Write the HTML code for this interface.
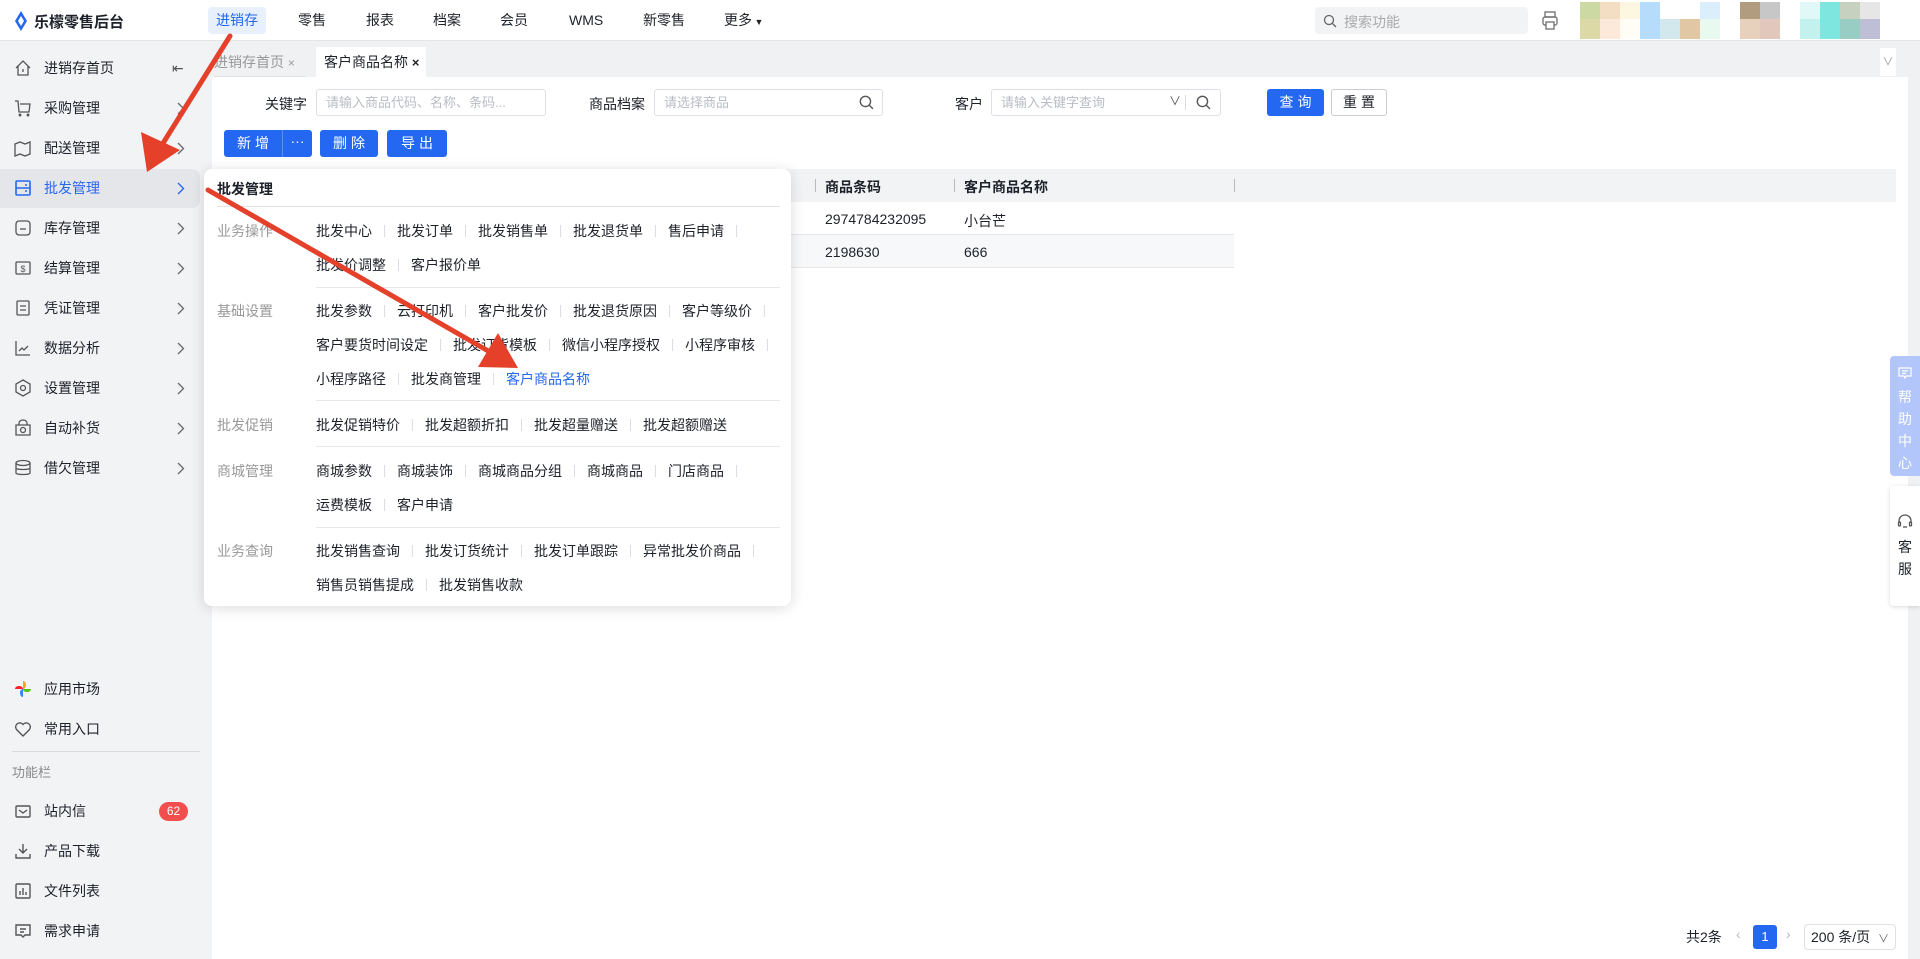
<!DOCTYPE html>
<html><head><meta charset="utf-8"><style>
*{margin:0;padding:0;box-sizing:border-box}
body{width:1920px;height:959px;position:relative;overflow:hidden;background:#fff;font-family:"Liberation Sans","Noto Sans CJK SC",sans-serif;font-size:14px;color:#1d2129}
.abs{position:absolute}
.top{left:0;top:0;width:1920px;height:41px;background:#fff;border-bottom:1px solid #e3e5e8}
.nav{top:0;height:41px;line-height:41px;font-size:14px;color:#1d2129}
.side{left:0;top:41px;width:212px;height:918px;background:#f2f3f5}
.si{position:absolute;left:0;width:200px;height:39px;line-height:39px;padding-left:44px;font-size:14px;color:#1d2129}
.si svg{position:absolute;left:14px;top:10px}
.si .chev{position:absolute;left:177px;top:13px}
.act{background:#e5e6ea;border-radius:0 8px 8px 0;color:#2468f2}
.inp{height:27px;border:1px solid #dcdfe6;border-radius:3px;background:#fff;color:#b8bcc4;font-size:13px;line-height:25px;padding-left:9px}
.btn{height:27px;line-height:27px;background:#2468f2;color:#fff;text-align:center;border-radius:3px;font-size:14px;letter-spacing:4px}
.pop{left:204px;top:169px;width:587px;height:437px;background:#fff;border-radius:8px;box-shadow:0 2px 14px rgba(0,0,0,.14)}
.row{position:absolute;left:112px;font-size:14px;color:#1d2129;white-space:nowrap}
.row span{display:inline-block}
.row i{display:inline-block;width:1px;height:12px;background:#dcdfe6;margin:0 12px;vertical-align:-1px}
.gl{position:absolute;left:13px;color:#999;font-size:14px}
.hl{position:absolute;left:112px;width:464px;height:1px;background:#e8e8e8}
.av{position:absolute;width:20px}
</style></head><body>
<div class="abs top"></div>
<svg class="abs" style="left:14px;top:11px" width="14" height="20" viewBox="0 0 14 20"><path d="M7 0 L13 10 L7 20 L1 10Z" fill="#2468f2"/><path d="M7 5 L10 10 L7 15 L4 10Z" fill="#fff"/></svg>
<div class="abs" style="left:34px;top:11px;font-size:15px;font-weight:bold;color:#1d2129">乐檬零售后台</div>
<div class="abs" style="left:208px;top:7px;width:58px;height:27px;background:#e8effd;border-radius:4px"></div>
<div class="abs nav" style="left:216px;color:#2468f2">进销存</div>
<div class="abs nav" style="left:298px">零售</div>
<div class="abs nav" style="left:366px">报表</div>
<div class="abs nav" style="left:433px">档案</div>
<div class="abs nav" style="left:500px">会员</div>
<div class="abs nav" style="left:569px">WMS</div>
<div class="abs nav" style="left:643px">新零售</div>
<div class="abs nav" style="left:724px">更多<span style="font-size:9px"> ▼</span></div>
<div class="abs" style="left:1315px;top:7px;width:213px;height:27px;background:#f2f3f5;border-radius:4px"></div>
<svg class="abs" style="left:1323px;top:14px" width="14" height="14" viewBox="0 0 14 14"><circle cx="6" cy="6" r="4.5" fill="none" stroke="#666" stroke-width="1.3"/><path d="M9.5 9.5L13 13" stroke="#666" stroke-width="1.3"/></svg>
<div class="abs" style="left:1344px;top:12px;color:#aaa;font-size:14px">搜索功能</div>
<svg class="abs" style="left:1542px;top:11px" width="16" height="20" viewBox="0 0 16 20"><rect x="3" y="1" width="10" height="5" fill="none" stroke="#777" stroke-width="1.4"/><rect x="1" y="6" width="14" height="8" rx="2" fill="none" stroke="#777" stroke-width="1.4"/><rect x="4" y="11" width="8" height="7" fill="#fff" stroke="#777" stroke-width="1.4"/></svg>
<!-- blurred avatars -->
<div class="av" style="left:1580px;top:2px;height:17px;background:#cdd9a3"></div><div class="av" style="left:1580px;top:19px;height:20px;background:#dcd9a6"></div>
<div class="av" style="left:1600px;top:2px;height:17px;background:#f3dec4"></div><div class="av" style="left:1600px;top:19px;height:20px;background:#fde9d9"></div>
<div class="av" style="left:1620px;top:2px;height:17px;background:#fdf6e1"></div><div class="av" style="left:1620px;top:19px;height:20px;background:#fffdf5"></div>
<div class="av" style="left:1640px;top:2px;height:37px;background:#b5dcfa"></div>
<div class="av" style="left:1660px;top:19px;height:20px;background:#d3e8ec"></div>
<div class="av" style="left:1680px;top:19px;height:20px;background:#e2c7a4"></div>
<div class="av" style="left:1700px;top:2px;height:17px;background:#dbeefc"></div><div class="av" style="left:1700px;top:19px;height:20px;background:#e8f9ef"></div>
<div class="av" style="left:1740px;top:2px;height:17px;background:#b19c80"></div><div class="av" style="left:1740px;top:19px;height:20px;background:#e7d1bd"></div>
<div class="av" style="left:1760px;top:2px;height:17px;background:#c7c7c7"></div><div class="av" style="left:1760px;top:19px;height:20px;background:#e2c8bc"></div>
<div class="av" style="left:1800px;top:2px;height:17px;background:#e0f8f6"></div><div class="av" style="left:1800px;top:19px;height:20px;background:#c2f1ee"></div>
<div class="av" style="left:1820px;top:2px;height:37px;background:#7ee6df"></div>
<div class="av" style="left:1840px;top:2px;height:17px;background:#c6d1c0"></div><div class="av" style="left:1840px;top:19px;height:20px;background:#98cdc4"></div>
<div class="av" style="left:1860px;top:2px;height:17px;background:#e6e6e6"></div><div class="av" style="left:1860px;top:19px;height:20px;background:#bebfd6"></div>

<!-- sidebar -->
<div class="abs side"></div>
<div class="si" style="top:49px">
<svg width="18" height="18" viewBox="0 0 18 18" fill="none" stroke="#555" stroke-width="1.3"><path d="M2 9L9 2L16 9M4 7V16H14V7M9 10V13"/></svg>进销存首页<span class="chev" style="left:172px;top:0;color:#555">⇤</span></div>
<div class="si" style="top:89px"><svg width="18" height="18" viewBox="0 0 18 18" fill="none" stroke="#555" stroke-width="1.3"><path d="M1 2H4L5 13H15L16 5H6"/><circle cx="6" cy="16" r=".8"/><circle cx="14" cy="16" r=".8"/></svg>采购管理<svg class="chev" style="left:177px;top:13px" width="8" height="13" viewBox="0 0 8 13" fill="none" stroke="#666" stroke-width="1.3"><path d="M1 1L6.5 6.5L1 12"/></svg></div>
<div class="si" style="top:129px"><svg width="18" height="18" viewBox="0 0 18 18" fill="none" stroke="#555" stroke-width="1.3"><path d="M1 5L6 3L11 5L16 3V15L11 17L6 15L1 17Z"/></svg>配送管理<svg class="chev" style="left:177px;top:13px" width="8" height="13" viewBox="0 0 8 13" fill="none" stroke="#666" stroke-width="1.3"><path d="M1 1L6.5 6.5L1 12"/></svg></div>
<div class="si act" style="top:169px"><svg width="18" height="18" viewBox="0 0 18 18" fill="none" stroke="#2468f2" stroke-width="1.6"><rect x="2" y="2" width="14" height="14" rx="1"/><path d="M2 9H16M11 6H13M11 12H13"/></svg>批发管理<svg class="chev" style="left:177px;top:13px" width="8" height="13" viewBox="0 0 8 13" fill="none" stroke="#2468f2" stroke-width="1.4"><path d="M1 1L6.5 6.5L1 12"/></svg></div>
<div class="si" style="top:209px"><svg width="18" height="18" viewBox="0 0 18 18" fill="none" stroke="#555" stroke-width="1.3"><rect x="2" y="2" width="14" height="14" rx="3"/><path d="M6 10H12"/></svg>库存管理<svg class="chev" style="left:177px;top:13px" width="8" height="13" viewBox="0 0 8 13" fill="none" stroke="#666" stroke-width="1.3"><path d="M1 1L6.5 6.5L1 12"/></svg></div>
<div class="si" style="top:249px"><svg width="18" height="18" viewBox="0 0 18 18" fill="none" stroke="#555" stroke-width="1.3"><rect x="2" y="3" width="14" height="12" rx="1"/><text x="9" y="13" font-size="9" text-anchor="middle" fill="#555" stroke="none">$</text></svg>结算管理<svg class="chev" style="left:177px;top:13px" width="8" height="13" viewBox="0 0 8 13" fill="none" stroke="#666" stroke-width="1.3"><path d="M1 1L6.5 6.5L1 12"/></svg></div>
<div class="si" style="top:289px"><svg width="18" height="18" viewBox="0 0 18 18" fill="none" stroke="#555" stroke-width="1.3"><rect x="3" y="2" width="12" height="14" rx="1"/><path d="M6 7H12M6 11H12"/></svg>凭证管理<svg class="chev" style="left:177px;top:13px" width="8" height="13" viewBox="0 0 8 13" fill="none" stroke="#666" stroke-width="1.3"><path d="M1 1L6.5 6.5L1 12"/></svg></div>
<div class="si" style="top:329px"><svg width="18" height="18" viewBox="0 0 18 18" fill="none" stroke="#555" stroke-width="1.3"><path d="M2 2V16H16M5 12L8 9L10 11L14 7"/></svg>数据分析<svg class="chev" style="left:177px;top:13px" width="8" height="13" viewBox="0 0 8 13" fill="none" stroke="#666" stroke-width="1.3"><path d="M1 1L6.5 6.5L1 12"/></svg></div>
<div class="si" style="top:369px"><svg width="18" height="18" viewBox="0 0 18 18" fill="none" stroke="#555" stroke-width="1.3"><path d="M9 1L16 5V13L9 17L2 13V5Z"/><circle cx="9" cy="9" r="2.5"/></svg>设置管理<svg class="chev" style="left:177px;top:13px" width="8" height="13" viewBox="0 0 8 13" fill="none" stroke="#666" stroke-width="1.3"><path d="M1 1L6.5 6.5L1 12"/></svg></div>
<div class="si" style="top:409px"><svg width="18" height="18" viewBox="0 0 18 18" fill="none" stroke="#555" stroke-width="1.3"><path d="M5 6V4A4 3 0 0 1 13 4V6M2 6H16V16H2Z"/><circle cx="9" cy="11" r="2.5"/></svg>自动补货<svg class="chev" style="left:177px;top:13px" width="8" height="13" viewBox="0 0 8 13" fill="none" stroke="#666" stroke-width="1.3"><path d="M1 1L6.5 6.5L1 12"/></svg></div>
<div class="si" style="top:449px"><svg width="18" height="18" viewBox="0 0 18 18" fill="none" stroke="#555" stroke-width="1.3"><ellipse cx="9" cy="4" rx="7" ry="2.5"/><path d="M2 4V14C2 16 16 16 16 14V4M2 9C2 11 16 11 16 9"/></svg>借欠管理<svg class="chev" style="left:177px;top:13px" width="8" height="13" viewBox="0 0 8 13" fill="none" stroke="#666" stroke-width="1.3"><path d="M1 1L6.5 6.5L1 12"/></svg></div>

<div class="si" style="top:670px"><svg width="18" height="18" viewBox="0 0 18 18"><path d="M9 1C13 1 13 9 9 9Z" fill="#f5a623"/><path d="M17 9C17 13 9 13 9 9Z" fill="#52c41a"/><path d="M9 17C5 17 5 9 9 9Z" fill="#2f8cf5"/><path d="M1 9C1 5 9 5 9 9Z" fill="#f5222d"/></svg>应用市场</div>
<div class="si" style="top:710px"><svg width="18" height="18" viewBox="0 0 18 18" fill="none" stroke="#555" stroke-width="1.4"><path d="M9 16L2.5 9.5A3.7 3.7 0 0 1 9 4.5A3.7 3.7 0 0 1 15.5 9.5Z"/></svg>常用入口</div>
<div class="abs" style="left:12px;top:751px;width:188px;height:1px;background:#d9dbe0"></div>
<div class="abs" style="left:12px;top:762px;color:#888;font-size:13px">功能栏</div>
<div class="si" style="top:792px"><svg width="18" height="18" viewBox="0 0 18 18" fill="none" stroke="#555" stroke-width="1.4"><rect x="2" y="4" width="14" height="11" rx="1"/><path d="M5 8L9 11L13 8"/></svg>站内信</div>
<div class="abs" style="left:159px;top:802px;width:29px;height:19px;border-radius:10px;background:#f24e4e;color:#fff;font-size:12px;text-align:center;line-height:19px">62</div>
<div class="si" style="top:832px"><svg width="18" height="18" viewBox="0 0 18 18" fill="none" stroke="#555" stroke-width="1.4"><path d="M9 2V11M5 7L9 11L13 7M2 12V16H16V12"/></svg>产品下载</div>
<div class="si" style="top:872px"><svg width="18" height="18" viewBox="0 0 18 18" fill="none" stroke="#555" stroke-width="1.4"><rect x="2" y="2" width="14" height="14" rx="1"/><path d="M6 13V9M9 13V6M12 13V10"/></svg>文件列表</div>
<div class="si" style="top:912px"><svg width="18" height="18" viewBox="0 0 18 18" fill="none" stroke="#555" stroke-width="1.4"><path d="M2 3H16V13H11L9 15L7 13H2Z"/><path d="M6 7H12M6 10H10"/></svg>需求申请</div>

<!-- tab row -->
<div class="abs" style="left:212px;top:41px;width:1708px;height:36px;background:#f0f1f3"></div>
<div class="abs" style="left:214px;top:47px;width:92px;height:30px;line-height:30px;color:#999;font-size:14px;border-bottom:1px solid #e0e0e0">进销存首页 <span style="font-size:12px">×</span></div>
<div class="abs" style="left:316px;top:47px;width:110px;height:30px;line-height:30px;background:#fff;padding-left:8px;font-size:14px">客户商品名称 <b style="font-size:13px">×</b></div>
<div class="abs" style="left:1880px;top:48px;width:16px;height:28px;background:#fff;color:#999;text-align:center;line-height:28px;font-size:11px">∨</div>
<div class="abs" style="left:212px;top:77px;width:1696px;height:882px;background:#fff"></div>
<div class="abs" style="left:1908px;top:77px;width:12px;height:882px;background:#f0f1f3"></div>

<!-- filters -->
<div class="abs" style="left:265px;top:94px;font-size:14px">关键字</div>
<div class="abs inp" style="left:316px;top:89px;width:230px">请输入商品代码、名称、条码...</div>
<div class="abs" style="left:589px;top:94px;font-size:14px">商品档案</div>
<div class="abs inp" style="left:654px;top:89px;width:229px">请选择商品</div>
<svg class="abs" style="left:859px;top:95px" width="15" height="15" viewBox="0 0 14 14"><circle cx="6" cy="6" r="4.8" fill="none" stroke="#555" stroke-width="1.3"/><path d="M9.5 9.5L13 13" stroke="#555" stroke-width="1.3"/></svg>
<div class="abs" style="left:955px;top:94px;font-size:14px">客户</div>
<div class="abs inp" style="left:991px;top:89px;width:230px">请输入关键字查询</div>
<div class="abs" style="left:1169px;top:92px;color:#555;font-size:12px">∨</div>
<div class="abs" style="left:1185px;top:95px;width:1px;height:15px;background:#ddd"></div>
<svg class="abs" style="left:1196px;top:95px" width="15" height="15" viewBox="0 0 14 14"><circle cx="6" cy="6" r="4.8" fill="none" stroke="#555" stroke-width="1.3"/><path d="M9.5 9.5L13 13" stroke="#555" stroke-width="1.3"/></svg>
<div class="abs btn" style="left:1267px;top:89px;width:57px;padding-left:4px">查询</div>
<div class="abs btn" style="left:1331px;top:89px;width:56px;background:#fff;color:#1d2129;border:1px solid #c9ccd1;line-height:25px;padding-left:4px">重置</div>

<div class="abs btn" style="left:224px;top:130px;width:88px"></div>
<div class="abs" style="left:224px;top:130px;width:58px;height:27px;line-height:27px;color:#fff;text-align:center;letter-spacing:4px;padding-left:4px">新增</div>
<div class="abs" style="left:282px;top:130px;width:1px;height:27px;background:#5b8ff5"></div>
<div class="abs" style="left:283px;top:128px;width:29px;color:#fff;text-align:center;font-size:14px;line-height:27px">···</div>
<div class="abs btn" style="left:320px;top:130px;width:58px;padding-left:4px">删除</div>
<div class="abs btn" style="left:387px;top:130px;width:60px;padding-left:4px">导出</div>

<!-- table -->
<div class="abs" style="left:224px;top:169px;width:1672px;height:33px;background:#f2f3f5"></div>
<div class="abs" style="left:815px;top:179px;width:1px;height:13px;background:#bbb"></div>
<div class="abs" style="left:825px;top:177px;font-weight:bold">商品条码</div>
<div class="abs" style="left:954px;top:179px;width:1px;height:13px;background:#bbb"></div>
<div class="abs" style="left:964px;top:177px;font-weight:bold">客户商品名称</div>
<div class="abs" style="left:1234px;top:179px;width:1px;height:13px;background:#bbb"></div>
<div class="abs" style="left:224px;top:234px;width:1010px;height:1px;background:#e8e8e8"></div>
<div class="abs" style="left:224px;top:235px;width:1010px;height:33px;background:#f7f8fa;border-bottom:1px solid #e8e8e8"></div>
<div class="abs" style="left:825px;top:211px">2974784232095</div>
<div class="abs" style="left:964px;top:211px">小台芒</div>
<div class="abs" style="left:825px;top:244px">2198630</div>
<div class="abs" style="left:964px;top:244px">666</div>

<!-- popup -->
<div class="abs pop">
<div class="abs" style="left:13px;top:10px;font-weight:bold;font-size:14px">批发管理</div>
<div class="abs" style="left:13px;top:37px;width:563px;height:1px;background:#e3e3e3"></div>
<div class="gl" style="top:52px">业务操作</div>
<div class="row" style="top:52px"><span>批发中心</span><i></i><span>批发订单</span><i></i><span>批发销售单</span><i></i><span>批发退货单</span><i></i><span>售后申请</span><i></i></div>
<div class="row" style="top:86px"><span>批发价调整</span><i></i><span>客户报价单</span></div>
<div class="hl" style="top:118px"></div>
<div class="gl" style="top:132px">基础设置</div>
<div class="row" style="top:132px"><span>批发参数</span><i></i><span>云打印机</span><i></i><span>客户批发价</span><i></i><span>批发退货原因</span><i></i><span>客户等级价</span><i></i></div>
<div class="row" style="top:166px"><span>客户要货时间设定</span><i></i><span>批发订货模板</span><i></i><span>微信小程序授权</span><i></i><span>小程序审核</span><i></i></div>
<div class="row" style="top:200px"><span>小程序路径</span><i></i><span>批发商管理</span><i></i><span style="color:#2468f2">客户商品名称</span></div>
<div class="hl" style="top:231px"></div>
<div class="gl" style="top:246px">批发促销</div>
<div class="row" style="top:246px"><span>批发促销特价</span><i></i><span>批发超额折扣</span><i></i><span>批发超量赠送</span><i></i><span>批发超额赠送</span></div>
<div class="hl" style="top:277px"></div>
<div class="gl" style="top:292px">商城管理</div>
<div class="row" style="top:292px"><span>商城参数</span><i></i><span>商城装饰</span><i></i><span>商城商品分组</span><i></i><span>商城商品</span><i></i><span>门店商品</span><i></i></div>
<div class="row" style="top:326px"><span>运费模板</span><i></i><span>客户申请</span></div>
<div class="hl" style="top:358px"></div>
<div class="gl" style="top:372px">业务查询</div>
<div class="row" style="top:372px"><span>批发销售查询</span><i></i><span>批发订货统计</span><i></i><span>批发订单跟踪</span><i></i><span>异常批发价商品</span><i></i></div>
<div class="row" style="top:406px"><span>销售员销售提成</span><i></i><span>批发销售收款</span></div>
</div>

<!-- right help -->
<div class="abs" style="left:1890px;top:356px;width:30px;height:120px;background:#b2c6fb;border-radius:4px 0 0 4px;color:#fff;text-align:center;font-size:14px;line-height:22px;padding-top:8px">
<svg width="14" height="13" viewBox="0 0 14 13" fill="none" stroke="#fff" stroke-width="1.2"><path d="M1 1H13V9H8L7 11L6 9H1Z"/><path d="M4 4H10M4 6.5H8"/></svg><br>帮<br>助<br>中<br>心</div>
<div class="abs" style="left:1890px;top:486px;width:30px;height:120px;background:#fff;border-radius:4px 0 0 4px;box-shadow:0 1px 5px rgba(0,0,0,.15);text-align:center;font-size:14px;line-height:22px;padding-top:28px">
<svg width="16" height="16" viewBox="0 0 16 16" fill="none" stroke="#555" stroke-width="1.3"><path d="M2 9V7A6 6 0 0 1 14 7V9"/><rect x="1.5" y="8" width="2" height="4" rx="1"/><rect x="12.5" y="8" width="2" height="4" rx="1"/><path d="M6 13H10"/></svg><br>客<br>服</div>

<!-- pagination -->
<div class="abs" style="left:1686px;top:927px;font-size:14px">共2条</div>
<div class="abs" style="left:1736px;top:926px;color:#bbb">‹</div>
<div class="abs" style="left:1753px;top:925px;width:24px;height:24px;background:#2468f2;border-radius:3px;color:#fff;text-align:center;line-height:24px;font-size:13px">1</div>
<div class="abs" style="left:1786px;top:926px;color:#bbb">›</div>
<div class="abs" style="left:1804px;top:924px;width:92px;height:26px;border:1px solid #dcdfe6;border-radius:4px;padding-left:6px;line-height:24px;font-size:14px">200 条/页 <span style="color:#666;font-size:11px;margin-left:4px">∨</span></div>

<!-- red arrows -->
<svg class="abs" style="left:0;top:0" width="1920" height="959">
<g fill="#e5402a" stroke="#e5402a">
<line x1="230" y1="36" x2="160" y2="148" stroke-width="5" stroke-linecap="round"/>
<polygon points="147,172 141,132 180,150" stroke="none"/>
<line x1="208" y1="190" x2="490" y2="352" stroke-width="5" stroke-linecap="round"/>
<polygon points="518,368 478,367 498,333" stroke="none"/>
</g>
</svg>
</body></html>
